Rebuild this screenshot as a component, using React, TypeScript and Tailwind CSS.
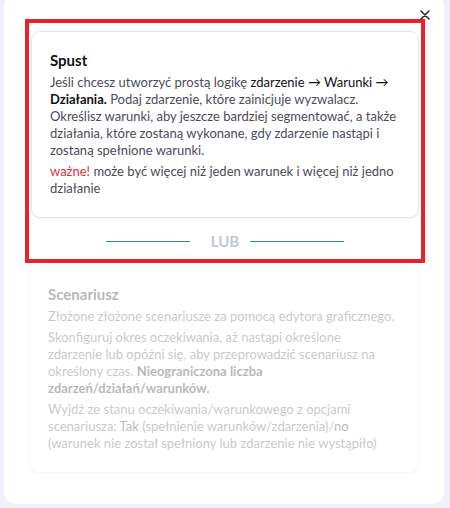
import React from 'react';

// Karta opisu typu automatyzacji
function OptionCard({ faded, children }: { faded?: boolean; children: React.ReactNode }) {
  return (
    <div
      className={`rounded-[9px] border border-[#e4e4ee] bg-white px-[18px] pt-[19px] pb-[20px] shadow-[0_1px_2px_rgba(30,30,60,0.06)] ${
        faded ? 'opacity-30' : ''
      }`}
    >
      {children}
    </div>
  );
}

export default function App() {
  return (
    <div
      className="relative h-[508px] w-[450px] overflow-hidden bg-[#eef1f9]"
      style={{ fontFamily: 'Lato, "Noto Sans", sans-serif' }}
    >
      <div className="relative ml-[4px] mt-[-6px] h-[510px] w-[440px] rounded-[12px] bg-white px-[19px] pl-[21px] pt-[25px]">
        <button className="absolute right-[14px] top-[16px] text-[#2a2a33]" aria-label="Zamknij">
          <svg width="10" height="10" viewBox="0 0 10 10" fill="none" stroke="currentColor" strokeWidth="1.6" strokeLinecap="round">
            <path d="M1 1l8 8M9 1l-8 8" />
          </svg>
        </button>

        <div className="border-4 border-[#e8212b] px-[2px] pt-[8px] pb-[9px]">
          <OptionCard>
            <h3 className="text-[15px] font-bold leading-[18px] text-[#111118]">Spust</h3>
            <p className="mt-[5px] text-[13px] leading-[17px] text-[#4b4b5c]">
              Jeśli chcesz utworzyć prostą logikę{' '}
              <span className="text-[#111118]">zdarzenie → Warunki → </span>
              <span className="font-bold text-[#111118]">Działania.</span> Podaj zdarzenie, które zainicjuje wyzwalacz.
              Określisz warunki, aby jeszcze bardziej segmentować, a także działania, które zostaną wykonane, gdy
              zdarzenie nastąpi i zostaną spełnione warunki.
            </p>
            <p className="mt-[4px] text-[13px] leading-[17px] text-[#4b4b5c]">
              <span className="text-[#e2303c]">ważne!</span> może być więcej niż jeden warunek i więcej niż jedno
              działanie
            </p>
          </OptionCard>

          <div className="mt-[14px] flex items-center justify-center">
            <div className="h-px w-[84px] bg-[#3c6cf0]" />
            <span className="ml-[21px] mr-[11px] text-[15px] font-bold leading-[18px] text-[#c1c7d7]">LUB</span>
            <div className="h-px w-[94px] bg-[#3c6cf0]" />
          </div>
        </div>

        <div className="mt-[2px] pl-[4px] pr-[6px]">
          <OptionCard faded>
            <h3 className="text-[15px] font-bold leading-[18px] text-[#111118]">Scenariusz</h3>
            <p className="mt-[5px] text-[13px] leading-[17px] text-[#4b4b5c]">
              Złożone złożone scenariusze za pomocą edytora graficznego.
            </p>
            <p className="mt-[4px] max-w-[338px] text-[13px] leading-[17px] text-[#4b4b5c]">
              Skonfiguruj okres oczekiwania, aż nastąpi określone zdarzenie lub opóźni się, aby przeprowadzić
              scenariusz na określony czas.{' '}
              <span className="font-bold text-[#111118]">Nieograniczona liczba zdarzeń/działań/warunków.</span>
            </p>
            <p className="mt-[4px] text-[13px] leading-[17px] text-[#4b4b5c]">
              Wyjdź ze stanu oczekiwania/warunkowego z opcjami scenariusza:{' '}
              <span className="text-[#111118]">Tak</span> (spełnienie warunków/zdarzenia)/
              <span className="text-[#111118]">no</span> (warunek nie został spełniony lub zdarzenie nie wystąpiło)
            </p>
          </OptionCard>
        </div>
      </div>
    </div>
  );
}
